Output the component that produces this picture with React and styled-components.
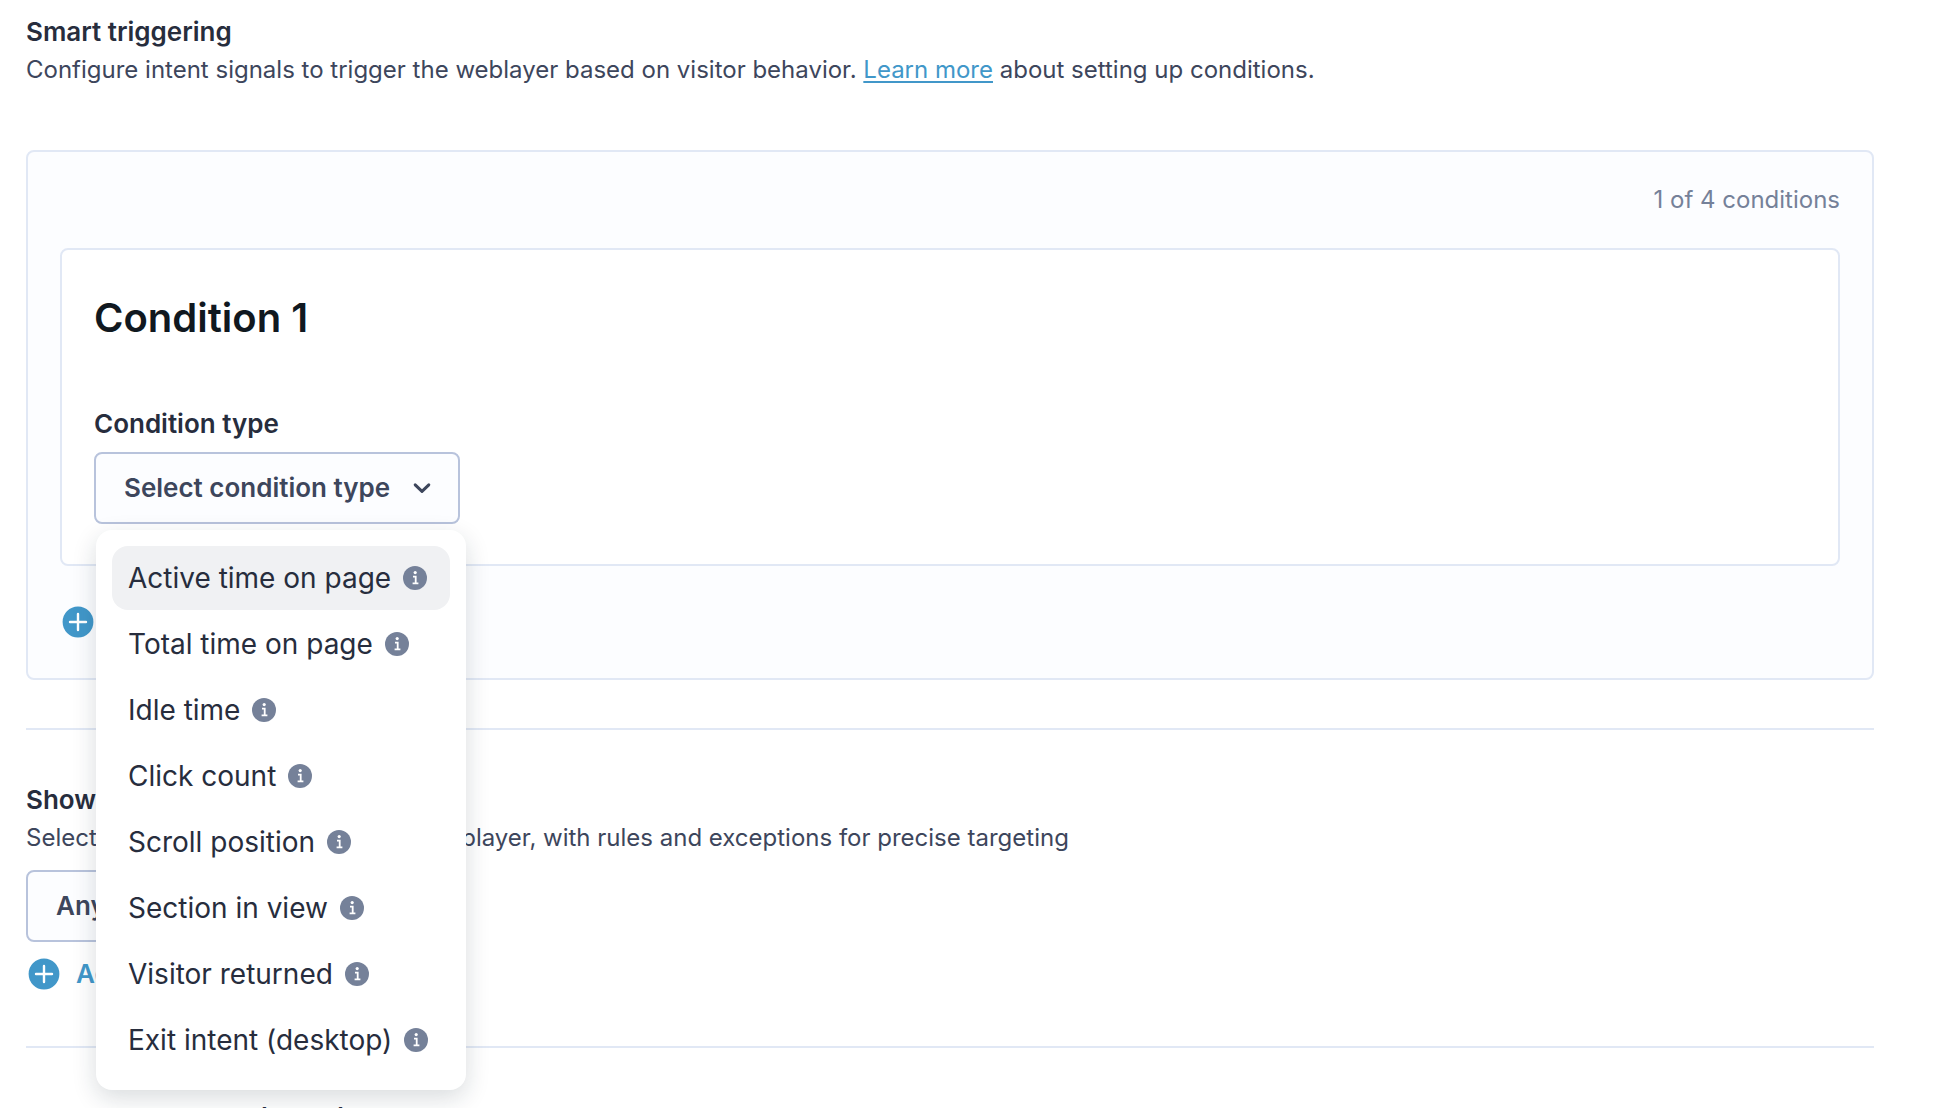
import React, { useId } from "react";
import styled, { createGlobalStyle } from "styled-components";

const GlobalStyle = createGlobalStyle`
  * { box-sizing: border-box; }
  body {
    margin: 0;
    height: 100vh;
    overflow: hidden;
    background: #fff;
    color: #272d3d;
    font-family: Inter, "Liberation Sans", sans-serif;
  }
`;

const Page = styled.main`
  padding: 12px 72px 0 26px;
`;

const Section = styled.section`
  display: flex;
  flex-direction: column;
  align-items: flex-start;
  padding-bottom: ${(p) => p.$bottom}px;
  margin-bottom: 50px;
  border-bottom: 2px solid #e1e8f5;
`;

const SectionTitle = styled.h2`
  margin: 0;
  font-size: 26px;
  line-height: 40px;
  font-weight: 600;
`;

const Description = styled.p`
  margin: 0 0 14px;
  font-size: 24px;
  line-height: 36px;
  color: #3d465c;
`;

const Link = styled.a`
  color: #4197c9;
  text-decoration: underline;
  text-decoration-thickness: 2px;
  text-underline-offset: 3px;
`;

const Panel = styled.div`
  align-self: stretch;
  margin-top: 48px;
  padding: 30px 32px 40px;
  border: 2px solid #e1e8f5;
  border-radius: 8px;
  background: #fcfdff;
`;

const Counter = styled.p`
  margin: 0 0 30px;
  text-align: right;
  font-size: 24px;
  line-height: 36px;
  color: #758199;
`;

const Card = styled.article`
  display: flex;
  flex-direction: column;
  align-items: flex-start;
  padding: 40px 32px;
  margin-bottom: 40px;
  border: 2px solid #e1e8f5;
  border-radius: 8px;
  background: #fff;
`;

const CardTitle = styled.h3`
  margin: 0 0 58px;
  font-size: 40px;
  line-height: 56px;
  font-weight: 600;
  color: #101820;
`;

const FieldLabel = styled.span`
  margin-bottom: 8px;
  font-size: 26px;
  line-height: 40px;
  font-weight: 600;
`;

const Anchor = styled.div`
  position: relative;
`;

const SelectButton = styled.button`
  display: flex;
  align-items: center;
  gap: 16px;
  height: 72px;
  margin: 0;
  padding: 0 20px 0 28px;
  border: 2px solid #b8c3dc;
  border-radius: 8px;
  background: #fcfdff;
  color: #3d465c;
  font: 600 26px/40px Inter, "Liberation Sans", sans-serif;
`;

const AddButton = styled.button`
  display: flex;
  align-items: center;
  gap: 16px;
  margin: 0;
  padding: 0 2px;
  border: 0;
  background: none;
  color: #4197c9;
  font: 600 26px/32px Inter, "Liberation Sans", sans-serif;
`;

const Rules = styled.div`
  padding-top: 16px;
`;

const Menu = styled.ul`
  position: absolute;
  top: calc(100% + 6px);
  left: 2px;
  z-index: 1;
  margin: 0;
  padding: 16px;
  list-style: none;
  border-radius: 16px;
  background: #fff;
  box-shadow: 0 8px 24px rgba(16, 40, 52, 0.16);
`;

const MenuItem = styled.button`
  display: flex;
  align-items: center;
  gap: 12px;
  width: 100%;
  height: 64px;
  margin: 0 0 2px;
  padding: 0 22px 0 16px;
  border: 0;
  border-radius: 16px;
  background: ${(p) => (p.$active ? "#f0f1f3" : "transparent")};
  color: #272d3d;
  font: 400 28px/40px Inter, "Liberation Sans", sans-serif;
  white-space: nowrap;
`;

const Icon = styled.svg`
  display: block;
  flex: none;
`;

const PlusIcon = () => (
  <Icon width="32" height="32" viewBox="0 0 32 32" aria-hidden="true">
    <circle cx="16" cy="16" r="15.4" fill="#4197c9" />
    <path d="M16 8v16M8 16h16" stroke="#fff" strokeWidth="2.4" strokeLinecap="round" />
  </Icon>
);

const InfoIcon = () => (
  <Icon width="24" height="24" viewBox="0 0 24 24" aria-hidden="true">
    <circle cx="12" cy="12" r="12" fill="#758199" />
    <circle cx="12.2" cy="6.6" r="1.6" fill="#fff" />
    <path d="M10 10.6h2.7v6.7M9.6 17.4h5.8" fill="none" stroke="#fff" strokeWidth="1.8" />
  </Icon>
);

const ChevronIcon = () => (
  <Icon width="32" height="32" viewBox="0 0 32 32" fill="none" aria-hidden="true">
    <path
      d="M9.2 12.8 16 19.4l6.8-6.6"
      stroke="#3d465c"
      strokeWidth="3"
      strokeLinecap="round"
      strokeLinejoin="round"
    />
  </Icon>
);

const conditionTypes = [
  "Active time on page",
  "Total time on page",
  "Idle time",
  "Click count",
  "Scroll position",
  "Section in view",
  "Visitor returned",
  "Exit intent (desktop)",
];

export default function App() {
  const labelId = useId();
  return (
    <>
      <GlobalStyle />
      <Page>
        <Section $bottom={48}>
          <SectionTitle>Smart triggering</SectionTitle>
          <Description>
            Configure intent signals to trigger the weblayer based on visitor behavior.{" "}
            <Link href="#learn-more">Learn more</Link> about setting up conditions.
          </Description>
          <Panel>
            <Counter>1 of 4 conditions</Counter>
            <Card>
              <CardTitle>Condition 1</CardTitle>
              <FieldLabel id={labelId}>Condition type</FieldLabel>
              <Anchor>
                <SelectButton type="button" aria-haspopup="menu" aria-expanded="true" aria-describedby={labelId}>
                  Select condition type
                  <ChevronIcon />
                </SelectButton>
                <Menu aria-labelledby={labelId}>
                  {conditionTypes.map((name, i) => (
                    <li key={name}>
                      <MenuItem type="button" $active={i === 0}>
                        {name}
                        <InfoIcon />
                      </MenuItem>
                    </li>
                  ))}
                </Menu>
              </Anchor>
            </Card>
            <AddButton type="button" aria-label="Add condition">
              <PlusIcon />
            </AddButton>
          </Panel>
        </Section>

        <Section $bottom={56}>
          <SectionTitle>Show on</SectionTitle>
          <Description>
            Select which pages will display the weblayer, with rules and exceptions for precise targeting
          </Description>
          <SelectButton type="button">
            Any page
            <ChevronIcon />
          </SelectButton>
          <Rules>
            <AddButton type="button">
              <PlusIcon />
              Add rule
            </AddButton>
          </Rules>
        </Section>

        <SectionTitle>Consent category (setup)</SectionTitle>
      </Page>
    </>
  );
}
